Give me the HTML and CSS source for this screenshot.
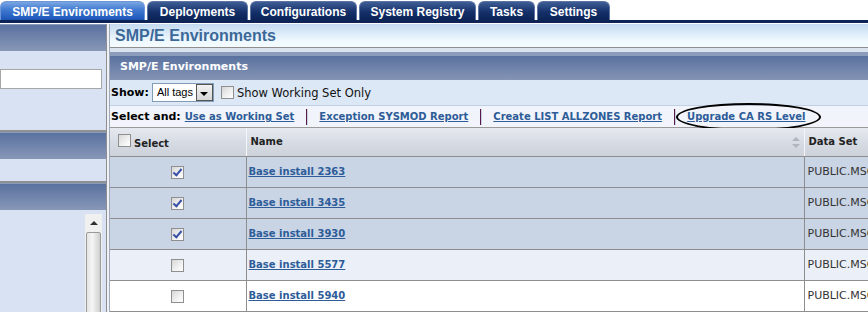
FILE: index.html
```html
<!DOCTYPE html>
<html>
<head>
<meta charset="utf-8">
<link rel="stylesheet" href="styles.css">
</head>
<body>
<div class="tabbar">
  <div class="tab active" style="width:145px">SMP/E Environments</div>
  <div class="tab" style="width:101px">Deployments</div>
  <div class="tab" style="width:107px">Configurations</div>
  <div class="tab" style="width:117px">System Registry</div>
  <div class="tab" style="width:57px">Tasks</div>
  <div class="tab" style="width:73px">Settings</div>
</div>
<div class="layout">
  <aside class="side">
    <div class="side-head"></div>
    <div class="side-body first">
      <input class="side-input" type="text">
    </div>
    <div class="side-head"></div>
    <div class="side-body second"></div>
    <div class="side-head"></div>
    <div class="side-body third">
      <div class="scrollbar">
        <div class="scroll-up"><span class="up-arrow"></span></div>
        <div class="scroll-thumb"></div>
      </div>
    </div>
  </aside>
  <div class="divider"></div>
  <main class="main">
    <div class="page-title">SMP/E Environments</div>
    <div class="panel">
      <div class="panel-head">SMP/E Environments</div>
      <div class="toolbar">
        <span class="lbl">Show:</span>
        <span class="select"><span class="select-text">All tags</span><span class="select-btn"><span class="down-arrow"></span></span></span>
        <span class="cb"></span>
        <span class="toolbar-text">Show Working Set Only</span>
      </div>
      <div class="actions">
        <span class="lbl">Select and:</span>
        <a class="act first-act">Use as Working Set</a>
        <span class="sep"></span>
        <a class="act">Exception SYSMOD Report</a>
        <span class="sep"></span>
        <a class="act">Create LIST ALLZONES Report</a>
        <span class="sep"></span>
        <a class="act">Upgrade CA RS Level</a>
        <span class="ellipse"></span>
      </div>
      <table class="grid">
        <colgroup><col class="c1"><col class="c2"><col class="c3"></colgroup>
        <thead>
          <tr>
            <th class="sel-h"><span class="cb"></span><span class="sel-text">Select</span></th>
            <th class="name-h">Name<span class="sort"><span class="sort-up"></span><span class="sort-down"></span></span></th>
            <th>Data Set</th>
          </tr>
        </thead>
        <tbody>
          <tr class="selected"><td class="sel"><span class="cb checked"></span></td><td><a class="row-link">Base install 2363</a></td><td class="ds">PUBLIC.MSGS</td></tr>
          <tr class="selected"><td class="sel"><span class="cb checked"></span></td><td><a class="row-link">Base install 3435</a></td><td class="ds">PUBLIC.MSGS</td></tr>
          <tr class="selected"><td class="sel"><span class="cb checked"></span></td><td><a class="row-link">Base install 3930</a></td><td class="ds">PUBLIC.MSGS</td></tr>
          <tr class="hover"><td class="sel"><span class="cb"></span></td><td><a class="row-link">Base install 5577</a></td><td class="ds">PUBLIC.MSGS</td></tr>
          <tr><td class="sel"><span class="cb"></span></td><td><a class="row-link">Base install 5940</a></td><td class="ds">PUBLIC.MSGS</td></tr>
        </tbody>
      </table>
    </div>
  </main>
</div>
</body>
</html>
```
FILE: styles.css
```css
* { box-sizing: border-box; }
html, body { margin: 0; padding: 0; }
body {
  width: 868px;
  height: 312px;
  overflow: hidden;
  background: #ffffff;
  font-family: "DejaVu Sans", Verdana, sans-serif;
  font-size: 11px;
  color: #000;
}

/* Tabs */
.tabbar {
  display: flex;
  align-items: flex-end;
  gap: 2px;
  height: 23px;
  padding-top: 1px;
  background: #ffffff;
  border-bottom: 3px solid #0c2456;
  box-shadow: 0 1px 0 #ffffff;
}
.tab {
  height: 19px;
  flex: none;
  border-radius: 6px 6px 0 0;
  background: linear-gradient(#3f5e96, #15306a 55%, #0b2356);
  border: 1px solid #5c74a4;
  border-bottom: none;
  color: #ffffff;
  font-family: "Liberation Sans", Arial, sans-serif;
  font-weight: bold;
  font-size: 12px;
  display: flex;
  align-items: center;
  justify-content: center;
  padding-top: 1px;
}
.tab.active {
  background: linear-gradient(#7aa6e2, #3e78d0 45%, #1b54b6);
  border-color: #6d96d6;
}

/* Layout */
.layout {
  display: flex;
  height: 289px;
  margin-top: 1px;
}
.side {
  width: 107px;
  flex: none;
  border-right: 1px solid #8e8e8e;
  background: #d8e2f2;
  display: flex;
  flex-direction: column;
}
.side-head {
  height: 27px;
  flex: none;
  background: linear-gradient(#8a9abb 0 1px, #5a72a0 1px, #8797b7 100%);
}
.side-body {
  flex: none;
  background: #d9e2f2;
  border-bottom: 2px solid #8e9092;
}
.side-body.first { height: 81px; padding-top: 18px; }
.side-body.second { height: 24px; }
.side-body.third { flex: 1; border-bottom: none; padding: 4px 4px 0 85px; }
.side-input {
  display: block;
  width: 102px;
  height: 20px;
  margin: 0;
  border: 1px solid #a6a6a6;
  background: #fff;
}
.scrollbar {
  width: 17px;
  height: 100%;
  background: #f0f0f0;
  display: flex;
  flex-direction: column;
  align-items: center;
}
.scroll-up {
  height: 18px;
  width: 17px;
  display: flex;
  align-items: center;
  justify-content: center;
}
.up-arrow {
  width: 0; height: 0;
  border-left: 4px solid transparent;
  border-right: 4px solid transparent;
  border-bottom: 4px solid #303030;
}
.scroll-thumb {
  width: 15px;
  flex: 1;
  border: 1px solid #9a9a9a;
  border-radius: 2px 2px 0 0;
  background: linear-gradient(90deg, #e4e4e4, #f6f6f6 40%, #cfcfcf);
}
.divider {
  width: 3px;
  flex: none;
  background: #eef2f8;
  border-right: 1px solid #a3a9b4;
}

/* Main */
.main {
  flex: 1;
  min-width: 0;
  display: flex;
  flex-direction: column;
  background: #dae2ee;
}
.page-title {
  height: 24px;
  flex: none;
  padding: 3px 0 0 5px;
  background: linear-gradient(#c4daf0, #eef8ff 70%, #f4fcff);
  border-bottom: 1px solid #8e8e8e;
  font-family: "Liberation Sans", Arial, sans-serif;
  font-size: 16px;
  font-weight: bold;
  color: #3c6898;
}
.panel {
  margin-top: 4px;
  flex: 1;
  background: #dce8f6;
  overflow: hidden;
}
.panel-head {
  height: 28px;
  background: linear-gradient(#8c9cbc 0 4px, #5a72a0 4px, #8494b4 100%);
  color: #ffffff;
  font-weight: bold;
  font-size: 11px;
  padding: 8px 0 0 10px;
}
.toolbar {
  height: 26px;
  display: flex;
  align-items: center;
  padding-left: 1px;
  background: #dce8f6;
  border-bottom: 1px solid #c2d0e4;
}
.lbl {
  font-weight: bold;
  font-size: 11px;
  margin-right: 3px;
}
.select {
  display: flex;
  width: 62px;
  height: 19px;
  border: 1px solid #7f9db9;
  background: #fff;
  align-items: stretch;
}
.select-text {
  flex: 1;
  white-space: nowrap;
  overflow: hidden;
  font-family: "Liberation Sans", Arial, sans-serif;
  font-size: 11px;
  padding: 2px 0 0 4px;
}
.select-btn {
  width: 17px;
  flex: none;
  border: 1px solid #555;
  background: linear-gradient(#f2f2f2, #d6d6d6);
  display: flex;
  align-items: center;
  justify-content: center;
  padding-top: 2px;
}
.down-arrow {
  width: 0; height: 0;
  border-left: 4px solid transparent;
  border-right: 4px solid transparent;
  border-top: 4px solid #000;
}
.cb {
  display: inline-block;
  width: 13px;
  height: 13px;
  flex: none;
  border: 1px solid #8f8f8f;
  background: linear-gradient(135deg, #d6d6d6, #f2f2f2 60%, #ffffff);
  position: relative;
}
.toolbar .cb { margin-left: 7px; }
.toolbar-text {
  margin-left: 3px;
  font-size: 11.5px;
  color: #111;
}
.cb.checked::after {
  content: "";
  position: absolute;
  left: 3px;
  top: 0px;
  width: 3px;
  height: 7px;
  border-right: 2px solid #3850a8;
  border-bottom: 2px solid #3850a8;
  transform: rotate(40deg);
}
.actions {
  position: relative;
  height: 22px;
  display: flex;
  align-items: center;
  padding-left: 1px;
  background: #f1f4fa;
  border-bottom: 1px solid #9a9a9a;
}
.actions .lbl { margin-right: 4px; }
.act {
  font-size: 10px;
  font-weight: bold;
  color: #2d5c98;
  text-decoration: underline;
}
.sep {
  width: 2px;
  height: 16px;
  margin: 0 11px 0 12px;
  background: #5a1a4e;
  border-right: 1px solid #c8d0dc;
}
.ellipse {
  position: absolute;
  left: 566px;
  top: -3px;
  width: 145px;
  height: 28px;
  border: 2px solid #000;
  border-radius: 50%;
}

/* Grid */
.grid {
  border-collapse: collapse;
  table-layout: fixed;
  width: 900px;
}
.grid col.c1 { width: 136px; }
.grid col.c2 { width: 558px; }
.grid col.c3 { width: 206px; }
.grid th {
  height: 28px;
  text-align: left;
  font-size: 10px;
  font-weight: bold;
  color: #222;
  background: linear-gradient(#e6e9ef, #d7dbe3 50%, #cdd1da);
  border-right: 1px solid #f4f6f9;
  border-bottom: 1px solid #8e8e8e;
  padding: 0 0 0 4px;
  position: relative;
}
.grid th.sel-h { padding: 6px 0 0 8px; vertical-align: top; }
.sel-text { margin-left: 3px; position: relative; top: 4px; }
.grid th.sel-h .cb { vertical-align: top; }
.sort {
  position: absolute;
  right: 4px;
  top: 9px;
  display: flex;
  flex-direction: column;
  gap: 3px;
}
.sort-up {
  width: 0; height: 0;
  border-left: 4px solid transparent;
  border-right: 4px solid transparent;
  border-bottom: 4px solid #b2b6bc;
}
.sort-down {
  width: 0; height: 0;
  border-left: 4px solid transparent;
  border-right: 4px solid transparent;
  border-top: 4px solid #b2b6bc;
}
.grid td {
  height: 31px;
  background: #ffffff;
  border-right: 1px solid #8e8e8e;
  border-bottom: 1px solid #8e8e8e;
  padding: 0 0 0 2px;
  font-size: 10px;
}
.grid tr.selected td { background: #c9d4e5; }
.grid tr.hover td { background: #ebf0f8; }
.grid td.sel { text-align: center; padding: 3px 0 0 0; }
.grid td.ds { padding-left: 3px; font-size: 11px; color: #333; }
.row-link {
  font-weight: bold;
  font-size: 10px;
  color: #2d5c98;
  text-decoration: underline;
}
```
